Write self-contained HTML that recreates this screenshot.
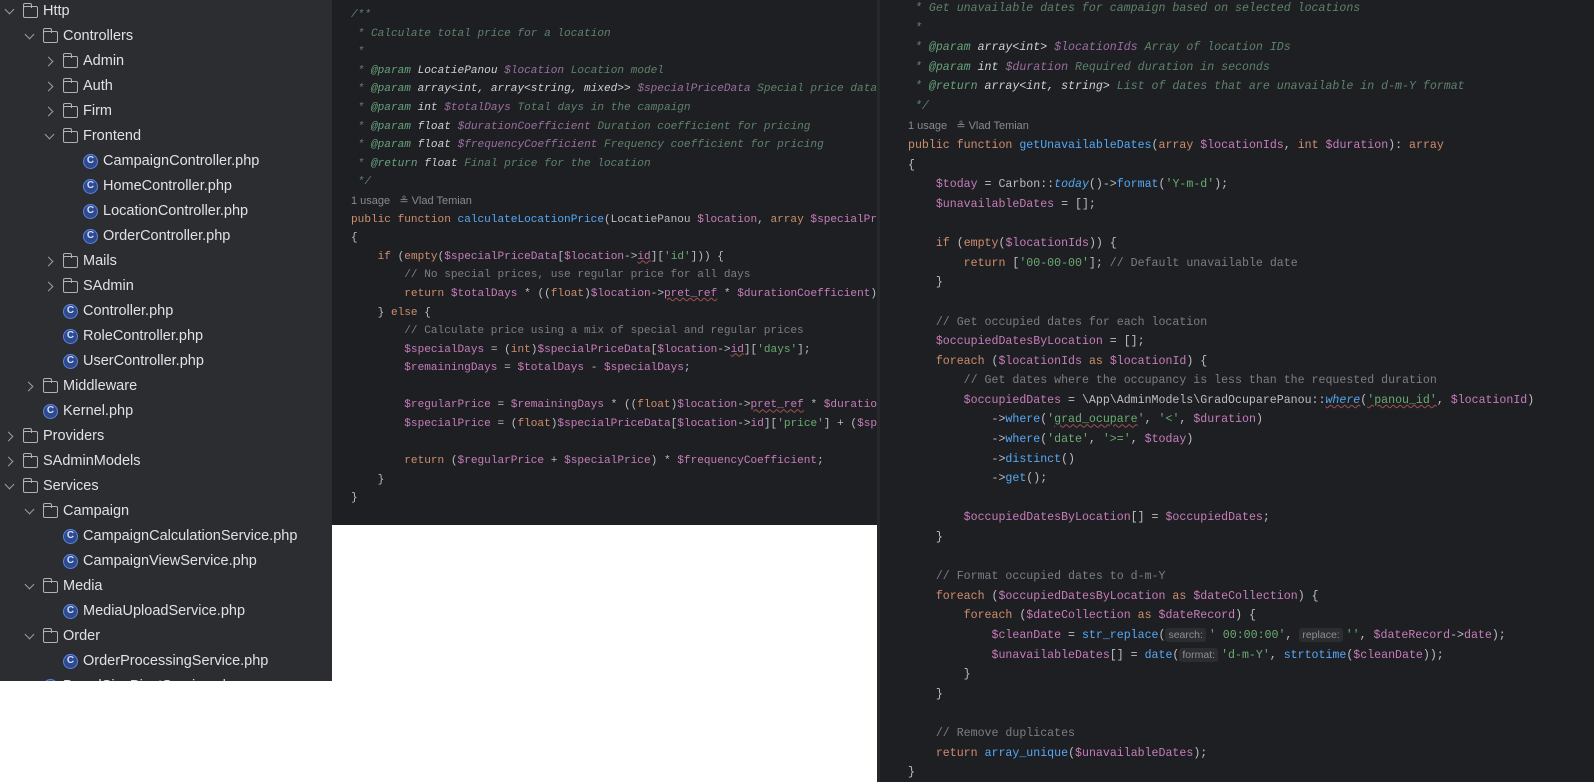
<!DOCTYPE html>
<html><head><meta charset="utf-8"><style>
*{margin:0;padding:0;box-sizing:border-box}
body{width:1594px;height:782px;background:#fff;position:relative;overflow:hidden;font-family:"Liberation Sans",sans-serif}
#tree{position:absolute;left:0;top:0;width:332px;height:681px;background:#2b2d30;overflow:hidden;color:#dfe1e5;font-size:14.5px}
#tree .in{position:absolute;left:0;top:1px;width:332px;height:700px}
.r{position:absolute;height:25px;line-height:25px;white-space:nowrap}
.ar{position:absolute;width:7px;height:7px;border-right:1.5px solid #9a9da3;border-bottom:1.5px solid #9a9da3}
.dn{transform:rotate(45deg)}.rt{transform:rotate(-45deg)}
.fo{position:absolute;width:15px;height:12px;border:1.4px solid #aeb1b6;border-radius:2px}
.fo:before{content:"";position:absolute;left:-1.4px;top:-4px;width:7px;height:4px;border:1.4px solid #aeb1b6;border-bottom:none;border-radius:2px 2px 0 0}
.ci{position:absolute;width:15px;height:15px;border-radius:50%;border:1.5px solid #5a83e6;background:#2f4a8c;color:#cfdcff;font-size:10px;line-height:12px;text-align:center;font-weight:bold}
.code{position:absolute;background:#1e1f22;overflow:hidden;font-family:"Liberation Mono",monospace;color:#bcbec4;white-space:normal}
.code div{height:var(--lh);line-height:var(--lh);white-space:pre}
.d{color:#5f826b;font-style:italic}.dt{color:#67a37c;font-style:italic}.dty{color:#cfd1d6;font-style:italic}.dv{color:#9b6fa0;font-style:italic}
.k{color:#cf8e6d}.f{color:#56a8f5}.v{color:#c77dbb}.s{color:#6aab73}.c{color:#7a7e85}.p{color:#c77dbb}
.u{font-family:"Liberation Sans",sans-serif;color:#868a91;font-size:11px}
.h{font-family:"Liberation Sans",sans-serif;font-size:10.5px;color:#8c9097;background:#2b2d30;border-radius:3px;padding:1px 3px;margin-right:3px}
.w{text-decoration:underline wavy #a05050 1px}
</style></head><body>
<div id="tree"><div class="in">
<div class="r" style="top:-2px;left:0;width:330px"><span class="ar dn" style="left:6px;top:7px"></span><span class="fo" style="left:23px;top:7px"></span><span style="position:absolute;left:43px">Http</span></div>
<div class="r" style="top:23px;left:0;width:330px"><span class="ar dn" style="left:26px;top:7px"></span><span class="fo" style="left:43px;top:7px"></span><span style="position:absolute;left:63px">Controllers</span></div>
<div class="r" style="top:48px;left:0;width:330px"><span class="ar rt" style="left:45px;top:9px"></span><span class="fo" style="left:63px;top:7px"></span><span style="position:absolute;left:83px">Admin</span></div>
<div class="r" style="top:73px;left:0;width:330px"><span class="ar rt" style="left:45px;top:9px"></span><span class="fo" style="left:63px;top:7px"></span><span style="position:absolute;left:83px">Auth</span></div>
<div class="r" style="top:98px;left:0;width:330px"><span class="ar rt" style="left:45px;top:9px"></span><span class="fo" style="left:63px;top:7px"></span><span style="position:absolute;left:83px">Firm</span></div>
<div class="r" style="top:123px;left:0;width:330px"><span class="ar dn" style="left:46px;top:7px"></span><span class="fo" style="left:63px;top:7px"></span><span style="position:absolute;left:83px">Frontend</span></div>
<div class="r" style="top:148px;left:0;width:330px"><span class="ci" style="left:83px;top:5px">C</span><span style="position:absolute;left:103px">CampaignController.php</span></div>
<div class="r" style="top:173px;left:0;width:330px"><span class="ci" style="left:83px;top:5px">C</span><span style="position:absolute;left:103px">HomeController.php</span></div>
<div class="r" style="top:198px;left:0;width:330px"><span class="ci" style="left:83px;top:5px">C</span><span style="position:absolute;left:103px">LocationController.php</span></div>
<div class="r" style="top:223px;left:0;width:330px"><span class="ci" style="left:83px;top:5px">C</span><span style="position:absolute;left:103px">OrderController.php</span></div>
<div class="r" style="top:248px;left:0;width:330px"><span class="ar rt" style="left:45px;top:9px"></span><span class="fo" style="left:63px;top:7px"></span><span style="position:absolute;left:83px">Mails</span></div>
<div class="r" style="top:273px;left:0;width:330px"><span class="ar rt" style="left:45px;top:9px"></span><span class="fo" style="left:63px;top:7px"></span><span style="position:absolute;left:83px">SAdmin</span></div>
<div class="r" style="top:298px;left:0;width:330px"><span class="ci" style="left:63px;top:5px">C</span><span style="position:absolute;left:83px">Controller.php</span></div>
<div class="r" style="top:323px;left:0;width:330px"><span class="ci" style="left:63px;top:5px">C</span><span style="position:absolute;left:83px">RoleController.php</span></div>
<div class="r" style="top:348px;left:0;width:330px"><span class="ci" style="left:63px;top:5px">C</span><span style="position:absolute;left:83px">UserController.php</span></div>
<div class="r" style="top:373px;left:0;width:330px"><span class="ar rt" style="left:25px;top:9px"></span><span class="fo" style="left:43px;top:7px"></span><span style="position:absolute;left:63px">Middleware</span></div>
<div class="r" style="top:398px;left:0;width:330px"><span class="ci" style="left:43px;top:5px">C</span><span style="position:absolute;left:63px">Kernel.php</span></div>
<div class="r" style="top:423px;left:0;width:330px"><span class="ar rt" style="left:5px;top:9px"></span><span class="fo" style="left:23px;top:7px"></span><span style="position:absolute;left:43px">Providers</span></div>
<div class="r" style="top:448px;left:0;width:330px"><span class="ar rt" style="left:5px;top:9px"></span><span class="fo" style="left:23px;top:7px"></span><span style="position:absolute;left:43px">SAdminModels</span></div>
<div class="r" style="top:473px;left:0;width:330px"><span class="ar dn" style="left:6px;top:7px"></span><span class="fo" style="left:23px;top:7px"></span><span style="position:absolute;left:43px">Services</span></div>
<div class="r" style="top:498px;left:0;width:330px"><span class="ar dn" style="left:26px;top:7px"></span><span class="fo" style="left:43px;top:7px"></span><span style="position:absolute;left:63px">Campaign</span></div>
<div class="r" style="top:523px;left:0;width:330px"><span class="ci" style="left:63px;top:5px">C</span><span style="position:absolute;left:83px">CampaignCalculationService.php</span></div>
<div class="r" style="top:548px;left:0;width:330px"><span class="ci" style="left:63px;top:5px">C</span><span style="position:absolute;left:83px">CampaignViewService.php</span></div>
<div class="r" style="top:573px;left:0;width:330px"><span class="ar dn" style="left:26px;top:7px"></span><span class="fo" style="left:43px;top:7px"></span><span style="position:absolute;left:63px">Media</span></div>
<div class="r" style="top:598px;left:0;width:330px"><span class="ci" style="left:63px;top:5px">C</span><span style="position:absolute;left:83px">MediaUploadService.php</span></div>
<div class="r" style="top:623px;left:0;width:330px"><span class="ar dn" style="left:26px;top:7px"></span><span class="fo" style="left:43px;top:7px"></span><span style="position:absolute;left:63px">Order</span></div>
<div class="r" style="top:648px;left:0;width:330px"><span class="ci" style="left:63px;top:5px">C</span><span style="position:absolute;left:83px">OrderProcessingService.php</span></div>
<div class="r" style="top:673px;left:0;width:330px"><span class="ci" style="left:43px;top:5px">C</span><span style="position:absolute;left:63px">BoardSizePivotService.php</span></div>
</div></div>

<div class="code" style="left:332px;top:0;width:545px;height:525px;font-size:11.1px;--lh:18.6px;padding:6px 0 0 19px">
<div class="d">/**</div>
<div class="d"> * Calculate total price for a location</div>
<div class="d"> *</div>
<div class="d"> * <span class="dt">@param</span> <span class="dty">LocatiePanou</span> <span class="dv">$location</span> Location model</div>
<div class="d"> * <span class="dt">@param</span> <span class="dty">array&lt;int, array&lt;string, mixed&gt;&gt;</span> <span class="dv">$specialPriceData</span> Special price data</div>
<div class="d"> * <span class="dt">@param</span> <span class="dty">int</span> <span class="dv">$totalDays</span> Total days in the campaign</div>
<div class="d"> * <span class="dt">@param</span> <span class="dty">float</span> <span class="dv">$durationCoefficient</span> Duration coefficient for pricing</div>
<div class="d"> * <span class="dt">@param</span> <span class="dty">float</span> <span class="dv">$frequencyCoefficient</span> Frequency coefficient for pricing</div>
<div class="d"> * <span class="dt">@return</span> <span class="dty">float</span> Final price for the location</div>
<div class="d"> */</div>
<div class="u">1 usage   ≗ Vlad Temian</div>
<div><span class="k">public function </span><span class="f">calculateLocationPrice</span>(LocatiePanou <span class="v">$location</span>, <span class="k">array</span> <span class="v">$specialPriceData</span></div>
<div>{</div>
<div>    <span class="k">if</span> (<span class="k">empty</span>(<span class="v">$specialPriceData</span>[<span class="v">$location</span>-&gt;<span class="p w">id</span>][<span class="s">'id'</span>])) {</div>
<div>        <span class="c">// No special prices, use regular price for all days</span></div>
<div>        <span class="k">return</span> <span class="v">$totalDays</span> * ((<span class="k">float</span>)<span class="v">$location</span>-&gt;<span class="p w">pret_ref</span> * <span class="v">$durationCoefficient</span>)</div>
<div>    } <span class="k">else</span> {</div>
<div>        <span class="c">// Calculate price using a mix of special and regular prices</span></div>
<div>        <span class="v">$specialDays</span> = (<span class="k">int</span>)<span class="v">$specialPriceData</span>[<span class="v">$location</span>-&gt;<span class="p w">id</span>][<span class="s">'days'</span>];</div>
<div>        <span class="v">$remainingDays</span> = <span class="v">$totalDays</span> - <span class="v">$specialDays</span>;</div>
<div> </div>
<div>        <span class="v">$regularPrice</span> = <span class="v">$remainingDays</span> * ((<span class="k">float</span>)<span class="v">$location</span>-&gt;<span class="p w">pret_ref</span> * <span class="v">$durationCoefficient</span></div>
<div>        <span class="v">$specialPrice</span> = (<span class="k">float</span>)<span class="v">$specialPriceData</span>[<span class="v">$location</span>-&gt;<span class="p">id</span>][<span class="s">'price'</span>] + (<span class="v">$specialDays</span></div>
<div> </div>
<div>        <span class="k">return</span> (<span class="v">$regularPrice</span> + <span class="v">$specialPrice</span>) * <span class="v">$frequencyCoefficient</span>;</div>
<div>    }</div>
<div>}</div>
</div>

<div style="position:absolute;left:877px;top:0;width:3px;height:782px;background:#26282b"></div>
<div class="code" style="left:880px;top:-1px;width:714px;height:783px;font-size:11.6px;--lh:19.6px;padding:0 0 0 28px">
<div class="d"> * Get unavailable dates for campaign based on selected locations</div>
<div class="d"> *</div>
<div class="d"> * <span class="dt">@param</span> <span class="dty">array&lt;int&gt;</span> <span class="dv">$locationIds</span> Array of location IDs</div>
<div class="d"> * <span class="dt">@param</span> <span class="dty">int</span> <span class="dv">$duration</span> Required duration in seconds</div>
<div class="d"> * <span class="dt">@return</span> <span class="dty">array&lt;int, string&gt;</span> List of dates that are unavailable in d-m-Y format</div>
<div class="d"> */</div>
<div class="u">1 usage   ≗ Vlad Temian</div>
<div><span class="k">public function </span><span class="f">getUnavailableDates</span>(<span class="k">array</span> <span class="v">$locationIds</span>, <span class="k">int</span> <span class="v">$duration</span>): <span class="k">array</span></div>
<div>{</div>
<div>    <span class="v">$today</span> = Carbon::<span class="f" style="font-style:italic">today</span>()-&gt;<span class="f">format</span>(<span class="s">'Y-m-d'</span>);</div>
<div>    <span class="v">$unavailableDates</span> = [];</div>
<div> </div>
<div>    <span class="k">if</span> (<span class="k">empty</span>(<span class="v">$locationIds</span>)) {</div>
<div>        <span class="k">return</span> [<span class="s">'00-00-00'</span>]; <span class="c">// Default unavailable date</span></div>
<div>    }</div>
<div> </div>
<div>    <span class="c">// Get occupied dates for each location</span></div>
<div>    <span class="v">$occupiedDatesByLocation</span> = [];</div>
<div>    <span class="k">foreach</span> (<span class="v">$locationIds</span> <span class="k">as</span> <span class="v">$locationId</span>) {</div>
<div>        <span class="c">// Get dates where the occupancy is less than the requested duration</span></div>
<div>        <span class="v">$occupiedDates</span> = \App\AdminModels\GradOcuparePanou::<span class="f w" style="font-style:italic">where</span>(<span class="s w">'panou_id'</span>, <span class="v">$locationId</span>)</div>
<div>            -&gt;<span class="f">where</span>(<span class="s">'<span class="w">grad_ocupare</span>'</span>, <span class="s">'&lt;'</span>, <span class="v">$duration</span>)</div>
<div>            -&gt;<span class="f">where</span>(<span class="s">'date'</span>, <span class="s">'&gt;='</span>, <span class="v">$today</span>)</div>
<div>            -&gt;<span class="f">distinct</span>()</div>
<div>            -&gt;<span class="f">get</span>();</div>
<div> </div>
<div>        <span class="v">$occupiedDatesByLocation</span>[] = <span class="v">$occupiedDates</span>;</div>
<div>    }</div>
<div> </div>
<div>    <span class="c">// Format occupied dates to d-m-Y</span></div>
<div>    <span class="k">foreach</span> (<span class="v">$occupiedDatesByLocation</span> <span class="k">as</span> <span class="v">$dateCollection</span>) {</div>
<div>        <span class="k">foreach</span> (<span class="v">$dateCollection</span> <span class="k">as</span> <span class="v">$dateRecord</span>) {</div>
<div>            <span class="v">$cleanDate</span> = <span class="f">str_replace</span>(<span class="h">search:</span><span class="s">' 00:00:00'</span>, <span class="h">replace:</span><span class="s">''</span>, <span class="v">$dateRecord</span>-&gt;<span class="p">date</span>);</div>
<div>            <span class="v">$unavailableDates</span>[] = <span class="f">date</span>(<span class="h">format:</span><span class="s">'d-m-Y'</span>, <span class="f">strtotime</span>(<span class="v">$cleanDate</span>));</div>
<div>        }</div>
<div>    }</div>
<div> </div>
<div>    <span class="c">// Remove duplicates</span></div>
<div>    <span class="k">return</span> <span class="f">array_unique</span>(<span class="v">$unavailableDates</span>);</div>
<div>}</div>
</div>
</body></html>
